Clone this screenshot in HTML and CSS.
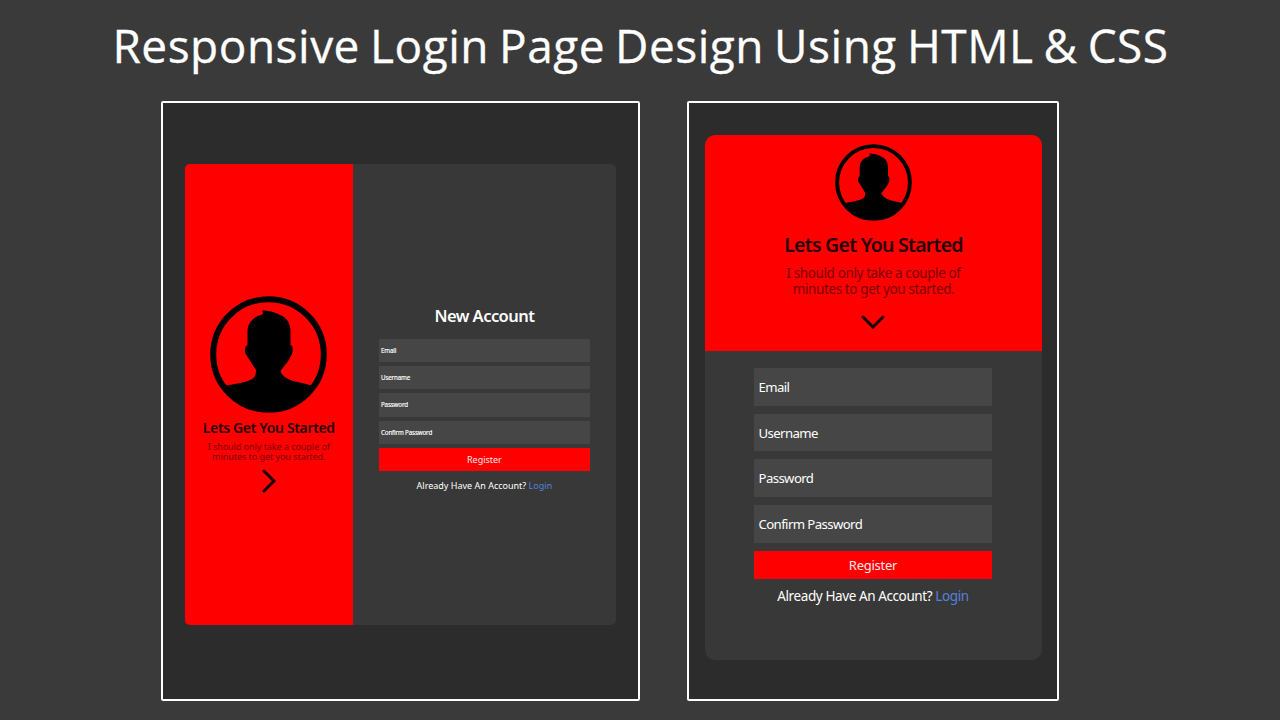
FILE: index.html
```html
<!DOCTYPE html>
<html lang="en">
<head>
<meta charset="utf-8">
<title>Responsive Login Page Design</title>
<link rel="stylesheet" href="styles.css">
</head>
<body>
<svg class="symbols" width="0" height="0">
  <symbol id="avatar" viewBox="0 0 117 117">
    <clipPath id="disc"><circle cx="58.5" cy="58.5" r="57"/></clipPath>
    <circle cx="58.5" cy="58.5" r="55.3" fill="none" stroke="currentColor" stroke-width="6"/>
    <path clip-path="url(#disc)" fill="currentColor" d="M52 18.500Q54 17 52 14.500C59 14.500 66 16.500 70 19C77 21.500 80.500 28 80.500 35V49C84 50 83 55 81.500 59C79 65 74 70 70.500 75C72 80 77 83 83 85C91 87 98 88 103 90V117H14V90C23 88 34 87 40 84C45 82 46 79 46 74C43 69 40 65 37 60C34 56 34 51 37.500 49V37C37 27 43 21 52 18.500Z"/>
  </symbol>
</svg>
<h1 class="title">Responsive Login Page Design Using HTML &amp; CSS</h1>
<main class="showcase">
  <section class="frame desktop">
    <div class="card">
      <aside class="intro">
        <svg class="avatar"><use href="#avatar"/></svg>
        <h2>Lets Get You Started</h2>
        <p>I should only take a couple of<br>minutes to get you started.</p>
        <svg class="chevron" viewBox="0 0 14 24"><path d="M2 2L12 12L2 22"/></svg>
      </aside>
      <form class="form">
        <h3>New Account</h3>
        <div class="field">Email</div>
        <div class="field">Username</div>
        <div class="field">Password</div>
        <div class="field">Confirm Password</div>
        <div class="register">Register</div>
        <div class="already">Already Have An Account? <a>Login</a></div>
      </form>
    </div>
  </section>
  <section class="frame mobile">
    <div class="card">
      <aside class="intro">
        <svg class="avatar"><use href="#avatar"/></svg>
        <h2>Lets Get You Started</h2>
        <p>I should only take a couple of<br>minutes to get you started.</p>
        <svg class="chevron" viewBox="0 0 24 14"><path d="M2 2L12 12L22 2"/></svg>
      </aside>
      <form class="form">
        <div class="field">Email</div>
        <div class="field">Username</div>
        <div class="field">Password</div>
        <div class="field">Confirm Password</div>
        <div class="register">Register</div>
        <div class="already">Already Have An Account? <a>Login</a></div>
      </form>
    </div>
  </section>
</main>
</body>
</html>
```
FILE: styles.css
```css
* { box-sizing: border-box; }
body { margin: 0; width: 1280px; height: 720px; overflow: hidden; background: #3a3a3a; color: #fff; font-family: "Noto Sans", sans-serif; }
h1, h2, h3, p { margin: 0; white-space: nowrap; }
.symbols { display: block; height: 0; }
.title { height: 100.500px; padding: 13px 0 0 1px; text-align: center; font: 400 46px/64px "Open Sans", sans-serif; letter-spacing: 0.5px; word-spacing: -2.400px; -webkit-text-stroke: 0.3px #fff; }
.showcase { display: flex; gap: 47px; padding-left: 161px; }
.frame { height: 600px; border: 2px solid #fff; border-radius: 2px; background: #2c2c2c; }
.card { display: flex; overflow: hidden; background: #383838; }
.intro { display: flex; flex-direction: column; align-items: center; background: #fe0000; color: #000; text-align: center; }
.intro h2 { color: #280000; font-weight: 600; }
.intro p { color: #7a0000; }
.chevron { fill: none; stroke: #180000; stroke-width: 3; stroke-linecap: round; stroke-linejoin: miter; }
.form { display: flex; flex-direction: column; }
.field { display: flex; align-items: center; background: #464646; white-space: nowrap; }
.register { background: #fe0000; color: #ffe8e8; text-align: center; }
.already { text-align: center; white-space: nowrap; }
.already a { color: #5580d8; }

.desktop { width: 478.500px; padding: 61.500px 0 0 22px; }
.desktop .card { width: 431.300px; height: 461px; border-radius: 5px; }
.desktop .intro { width: 167.500px; padding-top: 132px; }
.desktop .avatar { width: 117px; height: 117px; }
.desktop h2 { margin-top: 5px; font-size: 14px; line-height: 20px; letter-spacing: -0.35px; }
.desktop p { margin-top: 3.500px; font-size: 9px; line-height: 10.500px; letter-spacing: -0.05px; }
.desktop .chevron { width: 14px; height: 24px; margin-top: 6.500px; }
.desktop .form { flex: 1; padding: 140px 26px 0; gap: 4px; }
.desktop h3 { height: 31px; font-size: 16.500px; line-height: 24px; font-weight: 600; text-align: center; letter-spacing: -0.55px; }
.desktop .field { height: 23.200px; padding-left: 2.500px; font-size: 6.200px; letter-spacing: -0.13px; -webkit-text-stroke: 0.15px #fff; }
.desktop .register { height: 23.500px; font-size: 9px; line-height: 24px; }
.desktop .already { margin-top: 4px; font-size: 9px; line-height: 14px; }

.mobile { width: 372.500px; padding: 32.500px 0 0 16.500px; }
.mobile .card { flex-direction: column; width: 337px; height: 525px; border-radius: 10px; }
.mobile .intro { height: 215.500px; padding-top: 9px; }
.mobile .avatar { width: 77px; height: 77px; margin-right: 1px; }
.mobile h2 { margin-top: 9px; font-size: 19.500px; line-height: 30px; letter-spacing: -0.75px; }
.mobile p { margin-top: 4.500px; font-size: 13.500px; line-height: 16px; letter-spacing: -0.38px; }
.mobile .chevron { width: 24px; height: 14px; margin: 18.500px 1px 0 0; }
.mobile .form { padding: 17.500px 50px 0 49px; gap: 8px; }
.mobile .field { height: 37.700px; padding-left: 4.500px; font-size: 13.200px; letter-spacing: -0.6px; }
.mobile .register { height: 28px; font-size: 13px; line-height: 28px; letter-spacing: -0.25px; }
.mobile .already { font-size: 13.500px; line-height: 18px; letter-spacing: -0.4px; }
```
